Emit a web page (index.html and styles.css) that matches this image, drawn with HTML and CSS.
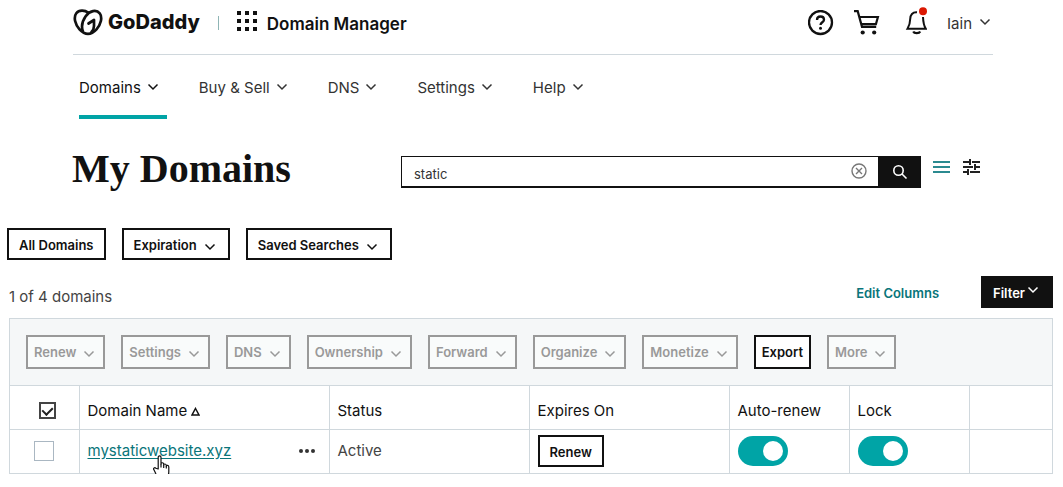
FILE: index.html
```html
<!DOCTYPE html>
<html lang="en">
<head>
<meta charset="utf-8">
<title>Domain Manager</title>
<meta name="viewport" content="width=device-width, initial-scale=1">
<link rel="stylesheet" href="styles.css">
</head>
<body>
<svg class="defs" aria-hidden="true">
  <symbol id="chev" viewBox="0 0 12 8"><path d="M1.500 1.500 6 6l4.500-4.500" fill="none" stroke="currentColor" stroke-width="1.500"/></symbol>
</svg>
<header class="top">
  <a class="brand" href="#">
    <svg class="brand-mark" viewBox="0 0 30 27" fill="none" stroke="#111" stroke-width="2.700" stroke-linecap="round" stroke-linejoin="round" aria-hidden="true">
      <path d="M15.500 3.800C11.500.800 6 .800 3.300 4.300c-3 4-1.200 11.200 3.200 16 2.500 2.700 5.500 4.500 8.500 4.500s6-1.800 8.500-4.500c4.400-4.800 6.200-12 3.200-16-3.200-4-10-2.800-14.200 3.200-3.300 4.800-4.200 10.500-2.600 14.800"/>
      <path d="M15.500 14.500 21 11v6c0 2.500-1 4.500-2.500 6"/>
    </svg>
    <span class="brand-name">GoDaddy</span>
  </a>
  <span class="rule"></span>
  <button class="icon-btn apps" aria-label="Apps">
    <svg width="20" height="20" viewBox="0 0 20 20" fill="#111"><path d="M0 0h4v4H0zM8 0h4v4H8zM16 0h4v4h-4zM0 8h4v4H0zM8 8h4v4H8zM16 8h4v4h-4zM0 16h4v4H0zM8 16h4v4H8zM16 16h4v4h-4z"/></svg>
  </button>
  <span class="product">Domain Manager</span>
  <div class="tools">
    <button class="icon-btn" aria-label="Help">
      <svg width="26" height="26" viewBox="0 0 26 26" fill="none" stroke="#111" stroke-width="2.300"><circle cx="12.500" cy="12.500" r="11.500"/><path d="M9 10c0-2.300 1.500-3.500 3.500-3.500s3.500 1.200 3.500 3.200c0 2.500-3.500 2.600-3.500 5.300"/><circle cx="12.500" cy="18.200" r="1.500" fill="#111" stroke="none"/></svg>
    </button>
    <button class="icon-btn" aria-label="Cart">
      <svg width="26" height="26" viewBox="0 0 26 26" fill="none" stroke="#111" stroke-width="2.200"><path d="M0 1.100h3.700l4.300 15.700h14.200M5.300 7h18.600l-2 7.200H7.300"/><circle cx="8.700" cy="22.500" r="2.100" fill="#111" stroke="none"/><circle cx="20.200" cy="22.500" r="2.100" fill="#111" stroke="none"/></svg>
    </button>
    <button class="icon-btn" aria-label="Notifications">
      <svg width="27" height="32" viewBox="0 0 27 32" fill="none" stroke="#111" stroke-width="2"><path d="M17 5.300c-4.500-.4-6.700 2.700-6.800 6.700-.1 4.500-.7 6.500-2.700 9.800h18.300c-2-3.300-2.600-6.500-2.800-11.800"/><path d="M13.200 24.500c1 2.200 6 2.200 7 0" stroke-width="2.200"/><circle cx="23" cy="4.200" r="4" fill="#db1802" stroke="none"/></svg>
    </button>
    <button class="user">Iain <svg class="chev"><use href="#chev"/></svg></button>
  </div>
</header>
<nav class="nav">
  <a class="nav-item current" href="#">Domains <svg class="chev"><use href="#chev"/></svg></a>
  <a class="nav-item" href="#">Buy &amp; Sell <svg class="chev"><use href="#chev"/></svg></a>
  <a class="nav-item" href="#">DNS <svg class="chev"><use href="#chev"/></svg></a>
  <a class="nav-item" href="#">Settings <svg class="chev"><use href="#chev"/></svg></a>
  <a class="nav-item" href="#">Help <svg class="chev"><use href="#chev"/></svg></a>
</nav>
<main>
  <div class="title-row">
    <h1>My Domains</h1>
    <form class="search">
      <input class="search-input" type="text" value="static" aria-label="Search domains">
      <button class="clear" type="button" aria-label="Clear"><svg width="16" height="16" viewBox="0 0 16 16" fill="none" stroke="#777" stroke-width="1.400"><circle cx="8" cy="8" r="7"/><path d="m5 5 6 6m0-6-6 6"/></svg></button>
      <button class="go" type="button" aria-label="Search"><svg width="16" height="16" viewBox="0 0 16 16" fill="none" stroke="#fff" stroke-width="1.600"><circle cx="6.500" cy="6.500" r="4.700"/><path d="m10 10 4.500 4.500"/></svg></button>
    </form>
    <div class="views">
      <button class="icon-btn" aria-label="List view"><svg width="18" height="14" viewBox="0 0 18 14" stroke="#2b8a90" stroke-width="2"><path d="M0 2h17M0 7h17M0 12h17"/></svg></button>
      <button class="icon-btn" aria-label="Adjust view"><svg width="18" height="16" viewBox="0 0 18 16" stroke="#222" stroke-width="2"><path d="M0 3h6m3 0h8M0 8h10m3 0h4M0 13h4m3 0h10M7 0v6M12 5v6M5 10v6"/></svg></button>
    </div>
  </div>
  <div class="filters">
    <button class="btn">All Domains</button>
    <button class="btn menu">Expiration <svg class="chev"><use href="#chev"/></svg></button>
    <button class="btn menu">Saved Searches <svg class="chev"><use href="#chev"/></svg></button>
  </div>
  <div class="summary">
    <span class="count">1 of 4 domains</span>
    <a class="edit" href="#">Edit Columns</a>
    <button class="filter">Filter<svg class="chev"><use href="#chev"/></svg></button>
  </div>
  <section class="panel">
    <div class="actions">
      <button class="btn act" disabled>Renew <svg class="chev"><use href="#chev"/></svg></button>
      <button class="btn act" disabled>Settings <svg class="chev"><use href="#chev"/></svg></button>
      <button class="btn act" disabled>DNS <svg class="chev"><use href="#chev"/></svg></button>
      <button class="btn act" disabled>Ownership <svg class="chev"><use href="#chev"/></svg></button>
      <button class="btn act" disabled>Forward <svg class="chev"><use href="#chev"/></svg></button>
      <button class="btn act" disabled>Organize <svg class="chev"><use href="#chev"/></svg></button>
      <button class="btn act" disabled>Monetize <svg class="chev"><use href="#chev"/></svg></button>
      <button class="btn act">Export</button>
      <button class="btn act" disabled>More <svg class="chev"><use href="#chev"/></svg></button>
    </div>
    <table class="grid">
      <colgroup><col class="c-check"><col class="c-name"><col class="c-wide"><col class="c-wide"><col class="c-toggle"><col class="c-toggle"><col></colgroup>
      <thead>
        <tr>
          <th class="check"><input class="box all" type="checkbox" checked aria-label="Select all"></th>
          <th>Domain Name<svg class="sort" width="9" height="9" viewBox="0 0 9 9" fill="none" stroke="#111" stroke-width="1.500" aria-hidden="true"><path d="M4.500 1.500 8 8H1z"/></svg></th>
          <th>Status</th>
          <th>Expires On</th>
          <th>Auto-renew</th>
          <th>Lock</th>
          <td></td>
        </tr>
      </thead>
      <tbody>
        <tr>
          <td class="check"><input class="box" type="checkbox" aria-label="Select mystaticwebsite.xyz"></td>
          <td>
            <div class="name-cell">
              <a class="domain" href="#">mystaticwebsite.xyz<svg class="hand" width="17" height="24" viewBox="0 0 17 24" fill="#fff" stroke="#111" stroke-width="1.200" stroke-linejoin="round" aria-hidden="true"><path d="M5.200 14V2.200C5.200.300 8 .300 8 2.200V9c0-1.700 2.700-1.700 2.700.300v.700c0-1.500 2.600-1.300 2.600.500v.700c.2-1.300 2.500-1.200 2.500.800v4.500c0 4-2.200 6.700-6.300 6.700-3.500 0-5-1.700-6.500-4.200L.800 14.600c-.8-1.500.9-2.500 2.100-1.400z"/><path d="M8 9v3.500M10.700 10v3M13.300 11v2.500" fill="none"/></svg></a>
              <button class="icon-btn" aria-label="More options"><svg width="16" height="4" viewBox="0 0 16 4" fill="#333"><circle cx="2" cy="2" r="2"/><circle cx="8" cy="2" r="2"/><circle cx="14" cy="2" r="2"/></svg></button>
            </div>
          </td>
          <td class="muted">Active</td>
          <td><button class="btn">Renew</button></td>
          <td><input class="toggle" type="checkbox" role="switch" checked aria-label="Auto-renew"></td>
          <td><input class="toggle" type="checkbox" role="switch" checked aria-label="Lock"></td>
          <td></td>
        </tr>
      </tbody>
    </table>
  </section>
</main>
</body>
</html>
```
FILE: styles.css
```css
* { box-sizing: border-box; }
body {
  margin: 0;
  background: #fff;
  color: #111;
  font: 15px/20px Inter, Roboto, sans-serif;
}
button, input { font: inherit; color: inherit; margin: 0; }
button { cursor: pointer; }
svg { display: block; flex: none; }
.defs { display: none; }
.chev { width: 12px; height: 8px; }

.top {
  display: flex;
  align-items: center;
  height: 55px;
  margin: 0 70px 0 73px;
  padding-bottom: 9px;
  border-bottom: 1px solid #d0d8dd;
}
.brand { display: flex; align-items: center; gap: 5px; color: #111; text-decoration: none; }
.brand-mark { width: 30px; height: 27px; }
.brand-name { font-size: 20px; font-weight: 800; line-height: 27px; }
.rule { width: 1px; height: 14px; margin: 0 18px; background: #8fb5b5; }
.icon-btn { display: block; padding: 0; border: 0; background: none; }
.apps { margin-bottom: 4px; }
.product { margin: 2px 0 0 10px; font-size: 17px; font-weight: 600; }
.tools { display: flex; align-items: center; gap: 20px; margin-left: auto; }
.user { display: flex; align-items: center; gap: 7px; padding: 2px 2px 0 0; border: 0; background: none; color: #333; }
.user .chev { margin-bottom: 4px; }

.nav { display: flex; gap: 32px; margin: 0 70px 0 79px; }
.nav-item {
  display: flex;
  align-items: center;
  gap: 6px;
  height: 64px;
  padding: 6px 8px 0 0;
  border-bottom: 4px solid transparent;
  color: #333;
  text-decoration: none;
}
.nav-item .chev { margin-bottom: 2px; }
.current { border-color: #00a4a6; color: #111; }

.title-row { display: flex; align-items: center; height: 60px; margin: 22px 82px 0 72px; }
h1 { flex: 1; margin: 0 0 4px; font: bold 40px/56px "Liberation Serif", serif; }
.search { position: relative; display: flex; width: 520px; height: 32px; margin-top: 2px; }
.search-input {
  flex: 1;
  min-width: 0;
  padding: 4px 40px 0 12px;
  border: 1px solid #111;
  border-bottom-width: 2px;
  border-radius: 0;
  background: #fff;
  color: #333;
  font-size: 13px;
}
.clear { position: absolute; right: 54px; top: 7px; padding: 0; border: 0; background: none; }
.go { display: grid; place-items: center; width: 42px; padding: 0; border: 0; background: #111; }
.views { display: flex; align-items: center; gap: 12px; margin: 0 0 8px 12px; }

.filters { display: flex; gap: 16px; margin: 27px 7px 0; }
.btn {
  display: flex;
  align-items: center;
  gap: 7px;
  height: 32px;
  padding: 2px 10px 0;
  border: 2px solid #111;
  border-radius: 0;
  background: #fff;
  font-size: 13px;
  font-weight: 600;
}
.btn .chev { margin-top: 3px; }
.menu { padding-right: 12px; }

.summary { display: flex; align-items: center; margin: 16px 10px 0 9px; }
.count { flex: 1; margin-top: 9px; color: #444; }
.edit { margin: 2px 42px 0 0; color: #09757a; font-size: 13px; font-weight: 600; text-decoration: none; }
.filter { display: flex; align-items: center; gap: 2px; height: 32px; padding: 2px 14px 0 12px; border: 0; background: #111; color: #fff; font-size: 13px; font-weight: 600; }
.filter .chev { margin-bottom: 6px; }

.panel { margin: 10px 10px 0 9px; border: 1px solid #d0d8dd; border-bottom: 0; }
.actions { display: flex; flex-wrap: wrap; gap: 16px; padding: 16px; background: #f5f7f8; }
.act { height: 34px; padding: 0 6px; }
.act:disabled { border-color: #999; background: #f9fbfb; color: #999; }
.act:disabled .chev { margin-right: 2px; }

.grid { width: 100%; border-collapse: collapse; table-layout: fixed; }
.grid th, .grid td {
  height: 44px;
  padding: 0 8px;
  border: 1px solid #d0d8dd;
  font-weight: 400;
  text-align: left;
}
.grid th { padding-top: 6px; }
.grid tbody td { padding-bottom: 2px; }
.grid th:first-child, .grid td:first-child { border-left: 0; }
.grid td:last-child { border-right: 0; }
.c-check { width: 69px; }
.c-name { width: 250px; }
.c-wide { width: 200px; }
.c-toggle { width: 120px; }
.sort { display: inline-block; margin-left: 4px; }
.box { appearance: none; display: block; width: 20px; height: 20px; margin-left: 16px; border: 1px solid #aab7c2; background: #fff; }
.all { display: grid; place-items: start center; width: 17px; height: 17px; margin-left: 21px; border: 2px solid #444; }
.all::before { content: ""; width: 5px; height: 8px; margin-top: 1px; border: solid #222; border-width: 0 2px 2px 0; transform: rotate(45deg); }
.name-cell { display: flex; align-items: center; justify-content: space-between; padding-right: 6px; }
.domain { position: relative; color: #09757a; text-underline-offset: 2px; }
.hand { position: absolute; left: 65px; top: 14px; }
.muted { color: #444; }
.toggle { appearance: none; display: flex; align-items: center; justify-content: flex-end; width: 50px; height: 30px; padding: 5px; border-radius: 15px; background: #00a4a6; }
.toggle::before { content: ""; width: 20px; height: 20px; border-radius: 50%; background: #fff; }
```
